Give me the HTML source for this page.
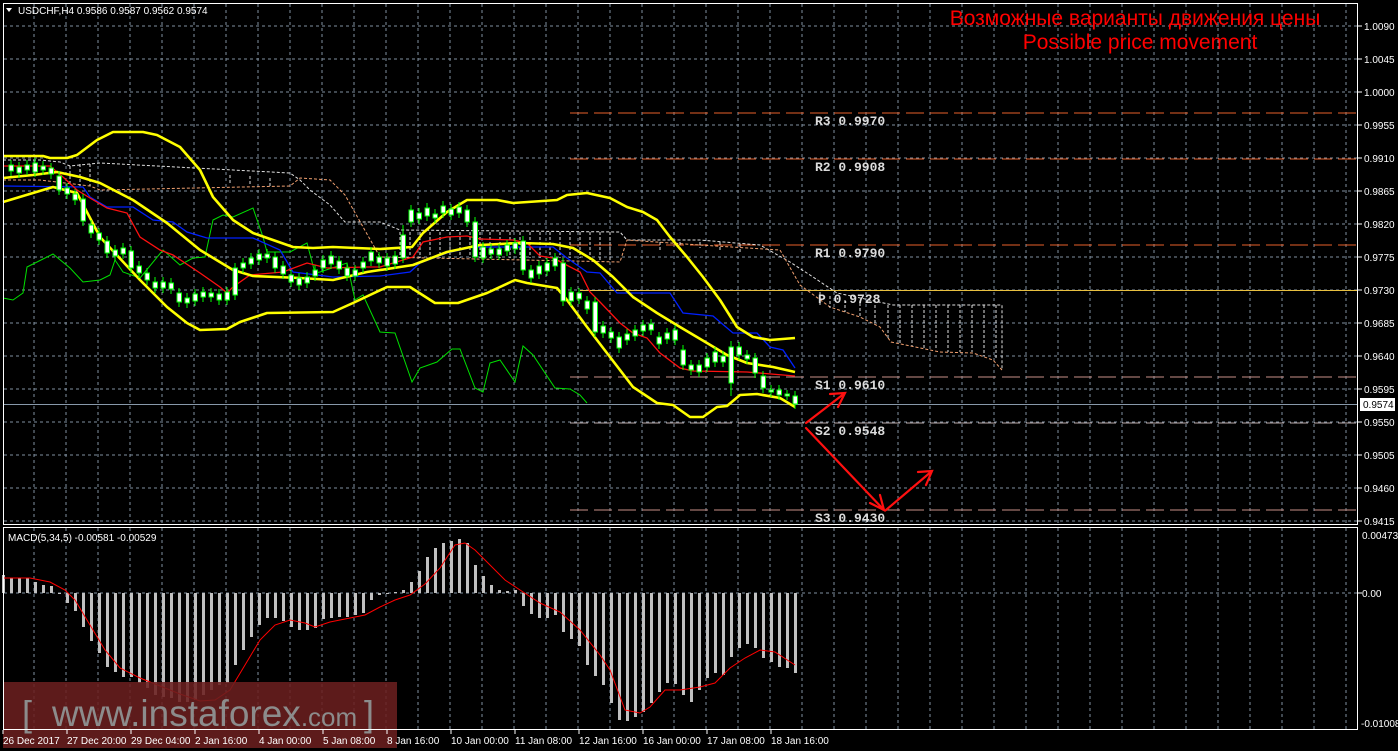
<!DOCTYPE html>
<html><head><meta charset="utf-8"><style>
html,body{margin:0;padding:0;background:#000;width:1398px;height:751px;overflow:hidden}
svg{display:block}
.ax{font-family:"Liberation Sans",sans-serif;font-size:10px;fill:#fff}
.pv{font-family:"Liberation Mono",monospace;font-size:13px;font-weight:bold;fill:#dcdcdc}
</style></head><body>
<svg width="1398" height="751" viewBox="0 0 1398 751" xmlns="http://www.w3.org/2000/svg">
<rect width="1398" height="751" fill="#000"/>
<!-- grid -->
<g stroke="#8090a0" stroke-width="1" stroke-dasharray="3,3" fill="none">
<path d="M34 4V524M66 4V524M98 4V524M130 4V524M162 4V524M194 4V524M226 4V524M258 4V524M290 4V524M322 4V524M354 4V524M386 4V524M418 4V524M450 4V524M482 4V524M514 4V524M546 4V524M578 4V524M610 4V524M642 4V524M674 4V524M706 4V524M738 4V524M770 4V524M802 4V524M834 4V524M866 4V524M898 4V524M930 4V524M962 4V524M994 4V524M1026 4V524M1058 4V524M1090 4V524M1122 4V524M1154 4V524M1186 4V524M1218 4V524M1250 4V524M1282 4V524M1314 4V524M1346 4V524"/>
<path d="M34 528V729M66 528V729M98 528V729M130 528V729M162 528V729M194 528V729M226 528V729M258 528V729M290 528V729M322 528V729M354 528V729M386 528V729M418 528V729M450 528V729M482 528V729M514 528V729M546 528V729M578 528V729M610 528V729M642 528V729M674 528V729M706 528V729M738 528V729M770 528V729M802 528V729M834 528V729M866 528V729M898 528V729M930 528V729M962 528V729M994 528V729M1026 528V729M1058 528V729M1090 528V729M1122 528V729M1154 528V729M1186 528V729M1218 528V729M1250 528V729M1282 528V729M1314 528V729M1346 528V729"/>
<path d="M4 26H1357M4 59H1357M4 92H1357M4 125H1357M4 158H1357M4 191H1357M4 224H1357M4 257H1357M4 290H1357M4 323H1357M4 356H1357M4 389H1357M4 422H1357M4 455H1357M4 488H1357M4 521H1357M4 593H1357"/>
</g>
<!-- pivot lines -->
<g fill="none" stroke-dasharray="18,6">
<path d="M570 113H1357M570 159H1357M570 245H1357" stroke="#e8602a"/>
<path d="M570 377H1357M570 510H1357" stroke="#c89088"/>
<path d="M570 423H1357" stroke="#b8a8a8"/>
</g>
<path d="M580 290.5H1357" stroke="#e8c040" stroke-width="1"/>
<path d="M4 404.5H1357" stroke="#8899aa" stroke-width="1"/>
<!-- ichimoku cloud -->
<g fill="none" stroke-width="1" stroke-dasharray="3,2">
<polyline stroke="#e0e0e0" points="3,160 40,160 60,162 70,166 100,163 290,173 300,180 310,190 330,205 345,222 380,222 400,230 620,232 627,240 700,240 760,245 790,262 813,277 837,293 893,305 1002,305 1002,370"/>
<polyline stroke="#f0a070" points="3,180 40,180 90,186 100,190 290,186 300,178 330,180 345,195 380,257 620,262 627,240 700,245 780,250 800,285 830,307 860,317 880,327 891,342 940,352 973,353 993,360 1002,370"/>
<path stroke="#e0e0e0" d="M400 232V258M410 232V258M420 232V258M430 232V258M440 232V258M450 232V258M460 232V258M470 232V258M480 232V258M490 232V258M500 232V258M510 232V258M520 232V258M530 232V258M540 232V258M550 232V258M560 232V258M570 232V258M580 232V258M590 232V260M600 232V260M610 232V260M900 305V344M912 305V346M924 305V348M936 305V350M948 305V352M960 305V352M972 305V352M984 305V356M996 305V360M820 292V305M830 296V308M845 300V312M860 303V318M875 305V324M888 305V338M70 166V185M80 164V186M90 164V186M230 175V185M250 176V186M270 178V187M660 242V252M680 242V250M700 242V248M720 242V250M740 244V252"/>
</g>
<!-- chikou green -->
<polyline fill="none" stroke="#00e000" stroke-width="1" points="3,298 13,300 23,293 27,267 53,254 70,268 83,282 100,280 110,275 115,260 123,272 140,278 163,250 180,265 193,258 205,257 213,220 223,215 233,217 253,208 263,237 267,252 290,252 307,243 315,273 320,272 347,263 355,300 363,295 380,332 395,333 412,382 420,368 437,362 452,349 460,349 475,388 483,392 490,363 500,360 515,382 523,346 533,355 555,388 570,389 580,395 587,403"/>
<!-- kijun blue -->
<polyline fill="none" stroke="#0020ff" stroke-width="1.3" points="3,186 83,187 90,197 107,207 133,207 153,220 173,222 187,232 207,238 253,238 280,250 293,272 333,277 380,276 410,272 420,263 447,253 473,247 553,247 567,258 587,272 600,273 617,293 670,293 683,313 713,316 733,333 757,333 770,347 783,350 795,368"/>
<!-- tenkan red -->
<polyline fill="none" stroke="#ff1010" stroke-width="1.3" points="3,166 50,166 63,177 77,190 90,198 107,208 127,213 140,237 160,250 173,255 200,273 220,287 227,293 233,287 250,275 283,272 307,263 327,268 367,267 380,267 413,257 423,242 447,237 467,236 480,239 513,240 527,243 540,256 553,258 580,272 590,292 600,302 620,323 633,333 647,338 660,353 680,368 693,371 747,372 795,376"/>
<!-- bollinger -->
<g fill="none" stroke="#ffff00" stroke-width="2.6" stroke-linejoin="round">
<polyline points="3,156 43,156 50,158 67,158 77,155 97,140 113,132 143,132 157,135 180,147 200,170 213,197 233,220 253,233 273,240 293,247 313,248 333,247 380,249 412,247 423,233 447,212 467,200 497,200 513,203 557,200 567,195 587,193 610,198 627,207 643,212 657,220 670,237 687,257 703,277 720,300 737,327 753,337 770,340 795,338"/>
<polyline points="3,178 33,175 57,172 80,177 100,183 133,200 167,223 200,250 233,270 253,276 300,278 333,280 367,272 400,267 413,265 447,252 480,245 520,243 553,244 573,248 593,260 613,277 633,297 657,313 680,327 707,343 727,355 747,363 773,367 795,372"/>
<polyline points="3,202 53,187 77,193 100,237 140,280 167,307 187,323 200,330 227,329 240,322 267,313 333,312 353,303 387,287 410,287 435,303 458,303 487,293 515,280 527,283 557,288 567,300 587,327 610,357 633,387 657,403 673,405 690,417 703,417 717,407 727,406 740,395 757,394 780,398 795,407"/>
</g>
<!-- candles -->
<g stroke="#00ff00" stroke-width="1" fill="#fff">
<path fill="none" d="M11 160V176M19 162V178M27 160V175M35 158V177M43 161V175M51 163V179M59 171V195M67 183V199M75 189V205M83 194V226M91 220V238M99 228V245M107 236V258M115 245V261M123 243V259M131 246V273M139 261V278M147 268V285M155 277V293M163 277V293M171 278V294M179 288V307M187 293V308M195 289V306M203 287V302M211 288V302M219 289V305M227 287V305M235 263V300M243 258V273M251 253V269M259 249V265M267 249V263M275 252V273M283 261V279M291 270V287M299 273V290M307 272V288M315 265V281M323 255V273M331 251V269M339 256V274M347 263V281M355 265V281M363 257V273M371 247V266M379 252V268M387 253V271M395 251V269M403 225V263M411 205V227M419 208V224M427 203V221M435 209V223M443 201V218M451 204V220M459 202V218M467 205V227M475 217V262M483 242V263M491 244V259M499 244V260M507 240V256M515 238V254M523 236V275M531 265V283M539 261V279M547 258V276M555 253V271M563 258V306M571 287V306M579 288V304M587 296V314M595 297V337M603 321V338M611 327V343M619 332V353M627 329V345M635 325V341M643 320V336M651 319V335M659 332V349M667 328V344M675 325V345M683 345V370M691 360V375M699 360V377M707 353V372M715 347V367M723 351V367M731 341V396M739 342V360M747 350V364M755 353V378M763 371V393M771 385V397M779 385V400M787 390V400M795 391V409"/>
<rect x="9" y="165" width="4.5" height="6"/><rect x="17" y="167" width="4.5" height="6"/><rect x="25" y="165" width="4.5" height="5"/><rect x="33" y="163" width="4.5" height="9"/><rect x="41" y="166" width="4.5" height="4"/><rect x="49" y="168" width="4.5" height="6"/><rect x="57" y="176" width="4.5" height="14"/><rect x="65" y="188" width="4.5" height="6"/><rect x="73" y="194" width="4.5" height="6"/><rect x="81" y="199" width="4.5" height="22"/><rect x="89" y="225" width="4.5" height="8"/><rect x="97" y="233" width="4.5" height="7"/><rect x="105" y="241" width="4.5" height="12"/><rect x="113" y="250" width="4.5" height="6"/><rect x="121" y="248" width="4.5" height="6"/><rect x="129" y="251" width="4.5" height="17"/><rect x="137" y="266" width="4.5" height="7"/><rect x="145" y="273" width="4.5" height="7"/><rect x="153" y="282" width="4.5" height="6"/><rect x="161" y="282" width="4.5" height="6"/><rect x="169" y="283" width="4.5" height="6"/><rect x="177" y="293" width="4.5" height="9"/><rect x="185" y="298" width="4.5" height="5"/><rect x="193" y="294" width="4.5" height="7"/><rect x="201" y="292" width="4.5" height="5"/><rect x="209" y="293" width="4.5" height="4"/><rect x="217" y="294" width="4.5" height="6"/><rect x="225" y="292" width="4.5" height="8"/><rect x="233" y="268" width="4.5" height="27"/><rect x="241" y="263" width="4.5" height="5"/><rect x="249" y="258" width="4.5" height="6"/><rect x="257" y="254" width="4.5" height="6"/><rect x="265" y="254" width="4.5" height="4"/><rect x="273" y="257" width="4.5" height="11"/><rect x="281" y="266" width="4.5" height="8"/><rect x="289" y="275" width="4.5" height="7"/><rect x="297" y="278" width="4.5" height="7"/><rect x="305" y="277" width="4.5" height="6"/><rect x="313" y="270" width="4.5" height="6"/><rect x="321" y="260" width="4.5" height="8"/><rect x="329" y="256" width="4.5" height="8"/><rect x="337" y="261" width="4.5" height="8"/><rect x="345" y="268" width="4.5" height="8"/><rect x="353" y="270" width="4.5" height="6"/><rect x="361" y="262" width="4.5" height="6"/><rect x="369" y="252" width="4.5" height="9"/><rect x="377" y="257" width="4.5" height="6"/><rect x="385" y="258" width="4.5" height="8"/><rect x="393" y="256" width="4.5" height="8"/><rect x="401" y="235" width="4.5" height="23"/><rect x="409" y="210" width="4.5" height="12"/><rect x="417" y="213" width="4.5" height="6"/><rect x="425" y="208" width="4.5" height="8"/><rect x="433" y="214" width="4.5" height="4"/><rect x="441" y="206" width="4.5" height="7"/><rect x="449" y="209" width="4.5" height="6"/><rect x="457" y="207" width="4.5" height="6"/><rect x="465" y="210" width="4.5" height="12"/><rect x="473" y="222" width="4.5" height="35"/><rect x="481" y="247" width="4.5" height="11"/><rect x="489" y="249" width="4.5" height="5"/><rect x="497" y="249" width="4.5" height="6"/><rect x="505" y="245" width="4.5" height="6"/><rect x="513" y="243" width="4.5" height="6"/><rect x="521" y="241" width="4.5" height="29"/><rect x="529" y="270" width="4.5" height="8"/><rect x="537" y="266" width="4.5" height="8"/><rect x="545" y="263" width="4.5" height="8"/><rect x="553" y="258" width="4.5" height="8"/><rect x="561" y="263" width="4.5" height="38"/><rect x="569" y="292" width="4.5" height="9"/><rect x="577" y="293" width="4.5" height="6"/><rect x="585" y="301" width="4.5" height="8"/><rect x="593" y="302" width="4.5" height="30"/><rect x="601" y="326" width="4.5" height="7"/><rect x="609" y="332" width="4.5" height="6"/><rect x="617" y="337" width="4.5" height="11"/><rect x="625" y="334" width="4.5" height="6"/><rect x="633" y="330" width="4.5" height="6"/><rect x="641" y="325" width="4.5" height="6"/><rect x="649" y="324" width="4.5" height="6"/><rect x="657" y="337" width="4.5" height="7"/><rect x="665" y="333" width="4.5" height="6"/><rect x="673" y="330" width="4.5" height="10"/><rect x="681" y="350" width="4.5" height="15"/><rect x="689" y="365" width="4.5" height="5"/><rect x="697" y="365" width="4.5" height="7"/><rect x="705" y="358" width="4.5" height="9"/><rect x="713" y="352" width="4.5" height="10"/><rect x="721" y="356" width="4.5" height="6"/><rect x="729" y="347" width="4.5" height="36"/><rect x="737" y="347" width="4.5" height="8"/><rect x="745" y="355" width="4.5" height="4"/><rect x="753" y="358" width="4.5" height="15"/><rect x="761" y="376" width="4.5" height="12"/><rect x="769" y="390" width="4.5" height="2"/><rect x="777" y="390" width="4.5" height="5"/><rect x="785" y="394" width="4.5" height="2"/><rect x="793" y="396" width="4.5" height="8"/>
</g>
<!-- pivot labels -->
<text class="pv" x="815" y="125">R3 0.9970</text>
<text class="pv" x="815" y="171">R2 0.9908</text>
<text class="pv" x="815" y="257">R1 0.9790</text>
<text class="pv" x="818" y="303">P 0.9728</text>
<text class="pv" x="815" y="389">S1 0.9610</text>
<text class="pv" x="815" y="435">S2 0.9548</text>
<text class="pv" x="815" y="522">S3 0.9430</text>
<!-- arrows -->
<g stroke="#ff1010" stroke-width="2.2" fill="none" stroke-linecap="round">
<path d="M806 423L845 393M830 394L845 393L838 407"/>
<path d="M806 428L884 510M870 503L884 510L880 495"/>
<path d="M886 510L932 471M918 472L932 471L926 485"/>
</g>
<!-- title -->
<text x="1135" y="25" text-anchor="middle" font-family="'Liberation Sans','DejaVu Sans',sans-serif" font-size="21" fill="#ff0000">Возможные варианты движения цены</text>
<text x="1140" y="49" text-anchor="middle" font-family="'Liberation Sans',sans-serif" font-size="21" fill="#ff0000">Possible price movement</text>
<!-- header -->
<path d="M6 8L12 8L9 12Z" fill="#fff"/>
<text class="ax" x="18" y="14" font-size="11">USDCHF,H4  0.9586 0.9587 0.9562 0.9574</text>
<!-- MACD histogram -->
<g fill="#c0c0c0">
<rect x="2" y="575" width="3" height="18"/><rect x="10" y="578" width="3" height="15"/><rect x="18" y="578" width="3" height="15"/><rect x="26" y="578" width="3" height="15"/><rect x="34" y="582" width="3" height="11"/><rect x="42" y="585" width="3" height="8"/><rect x="50" y="586" width="3" height="7"/><rect x="58" y="593" width="3" height="1"/>
<rect x="66" y="593" width="3" height="10"/><rect x="74" y="593" width="3" height="18"/><rect x="82" y="593" width="3" height="34"/><rect x="90" y="593" width="3" height="48"/><rect x="98" y="593" width="3" height="60"/><rect x="106" y="593" width="3" height="74"/><rect x="114" y="593" width="3" height="79"/><rect x="122" y="593" width="3" height="84"/><rect x="130" y="593" width="3" height="84"/><rect x="138" y="593" width="3" height="90"/><rect x="146" y="593" width="3" height="95"/><rect x="154" y="593" width="3" height="102"/><rect x="162" y="593" width="3" height="104"/><rect x="170" y="593" width="3" height="105"/><rect x="178" y="593" width="3" height="109"/><rect x="186" y="593" width="3" height="109"/><rect x="194" y="593" width="3" height="107"/><rect x="202" y="593" width="3" height="102"/><rect x="210" y="593" width="3" height="97"/><rect x="218" y="593" width="3" height="92"/><rect x="226" y="593" width="3" height="90"/><rect x="234" y="593" width="3" height="72"/><rect x="242" y="593" width="3" height="57"/><rect x="250" y="593" width="3" height="44"/><rect x="258" y="593" width="3" height="32"/><rect x="266" y="593" width="3" height="25"/><rect x="274" y="593" width="3" height="25"/><rect x="282" y="593" width="3" height="28"/><rect x="290" y="593" width="3" height="34"/><rect x="298" y="593" width="3" height="37"/><rect x="306" y="593" width="3" height="37"/><rect x="314" y="593" width="3" height="35"/><rect x="322" y="593" width="3" height="26"/><rect x="330" y="593" width="3" height="25"/><rect x="338" y="593" width="3" height="24"/><rect x="346" y="593" width="3" height="24"/><rect x="354" y="593" width="3" height="22"/><rect x="362" y="593" width="3" height="20"/><rect x="370" y="593" width="3" height="7"/><rect x="378" y="593" width="3" height="2"/><rect x="386" y="593" width="3" height="1"/>
<rect x="394" y="592" width="3" height="1"/><rect x="402" y="590" width="3" height="3"/><rect x="410" y="582" width="3" height="11"/><rect x="418" y="571" width="3" height="22"/><rect x="426" y="557" width="3" height="36"/><rect x="434" y="548" width="3" height="45"/><rect x="442" y="543" width="3" height="50"/><rect x="450" y="541" width="3" height="52"/><rect x="458" y="539" width="3" height="54"/><rect x="466" y="543" width="3" height="50"/><rect x="474" y="565" width="3" height="28"/><rect x="482" y="576" width="3" height="17"/><rect x="490" y="585" width="3" height="8"/><rect x="498" y="590" width="3" height="3"/><rect x="506" y="591" width="3" height="2"/><rect x="514" y="590" width="3" height="3"/>
<rect x="522" y="593" width="3" height="13"/><rect x="530" y="593" width="3" height="21"/><rect x="538" y="593" width="3" height="25"/><rect x="546" y="593" width="3" height="25"/><rect x="554" y="593" width="3" height="22"/><rect x="562" y="593" width="3" height="39"/><rect x="570" y="593" width="3" height="46"/><rect x="578" y="593" width="3" height="53"/><rect x="586" y="593" width="3" height="72"/><rect x="594" y="593" width="3" height="83"/><rect x="602" y="593" width="3" height="92"/><rect x="610" y="593" width="3" height="110"/><rect x="618" y="593" width="3" height="127"/><rect x="626" y="593" width="3" height="128"/><rect x="634" y="593" width="3" height="124"/><rect x="642" y="593" width="3" height="119"/><rect x="650" y="593" width="3" height="110"/><rect x="658" y="593" width="3" height="99"/><rect x="666" y="593" width="3" height="90"/><rect x="674" y="593" width="3" height="91"/><rect x="682" y="593" width="3" height="102"/><rect x="690" y="593" width="3" height="109"/><rect x="698" y="593" width="3" height="97"/><rect x="706" y="593" width="3" height="85"/><rect x="714" y="593" width="3" height="80"/><rect x="722" y="593" width="3" height="82"/><rect x="730" y="593" width="3" height="64"/><rect x="738" y="593" width="3" height="55"/><rect x="746" y="593" width="3" height="51"/><rect x="754" y="593" width="3" height="55"/><rect x="762" y="593" width="3" height="65"/><rect x="770" y="593" width="3" height="69"/><rect x="778" y="593" width="3" height="74"/><rect x="786" y="593" width="3" height="75"/><rect x="794" y="593" width="3" height="80"/>
</g>
<polyline fill="none" stroke="#ff0000" stroke-width="1" points="3,578 30,578 50,582 65,590 75,600 90,625 105,650 120,668 140,678 160,686 180,694 200,701 215,700 230,690 245,665 260,640 275,625 290,620 305,623 315,627 330,622 350,618 365,615 380,607 395,600 410,595 425,584 440,568 455,545 465,543 475,550 490,565 505,580 520,590 540,603 560,612 580,630 600,655 610,670 625,710 640,713 650,707 665,690 680,690 700,687 715,683 730,668 745,658 760,650 775,652 795,665"/>
<text class="ax" x="8" y="541">MACD(5,34,5) -0.00581 -0.00529</text>
<!-- watermark -->
<rect x="3" y="682" width="394" height="66" fill="#6a1f1f" fill-opacity="0.88"/>
<text x="22" y="726" font-family="'Liberation Sans',sans-serif" font-size="36" fill="#8c8c8c">[</text>
<text x="52" y="726" font-family="'Liberation Sans',sans-serif" font-size="37" fill="#8c8c8c">www.instaforex<tspan font-size="26">.com</tspan></text>
<text x="364" y="726" font-family="'Liberation Sans',sans-serif" font-size="36" fill="#8c8c8c">]</text>
<!-- borders -->
<rect x="3.5" y="3.5" width="1354" height="521" fill="none" stroke="#fff" stroke-width="1"/>
<rect x="3.5" y="527.5" width="1354" height="202" fill="none" stroke="#fff" stroke-width="1"/>
<!-- price axis -->
<g stroke="#fff"><path d="M1358 26h4M1358 59h4M1358 92h4M1358 125h4M1358 158h4M1358 191h4M1358 224h4M1358 257h4M1358 290h4M1358 323h4M1358 356h4M1358 389h4M1358 422h4M1358 455h4M1358 488h4M1358 521h4M1358 593h4"/></g>
<g class="ax">
<text x="1364" y="30">1.0090</text><text x="1364" y="63">1.0045</text><text x="1364" y="96">1.0000</text><text x="1364" y="129">0.9955</text><text x="1364" y="162">0.9910</text><text x="1364" y="195">0.9865</text><text x="1364" y="228">0.9820</text><text x="1364" y="261">0.9775</text><text x="1364" y="294">0.9730</text><text x="1364" y="327">0.9685</text><text x="1364" y="360">0.9640</text><text x="1364" y="393">0.9595</text><text x="1364" y="426">0.9550</text><text x="1364" y="459">0.9505</text><text x="1364" y="492">0.9460</text><text x="1364" y="525">0.9415</text>
<text x="1362" y="539">0.00473</text><text x="1362" y="597">0.00</text><text x="1361" y="727">-0.01008</text>
</g>
<rect x="1360" y="398" width="35" height="13" fill="#fff"/>
<text x="1363" y="408" font-family="'Liberation Sans',sans-serif" font-size="10" fill="#000">0.9574</text>
<!-- time axis -->
<g stroke="#fff"><path d="M3 730v4M67 730v4M131 730v4M195 730v4M259 730v4M323 730v4M387 730v4M451 730v4M515 730v4M579 730v4M643 730v4M707 730v4M771 730v4"/></g>
<g class="ax">
<text x="3" y="744">26 Dec 2017</text><text x="67" y="744">27 Dec 20:00</text><text x="131" y="744">29 Dec 04:00</text><text x="195" y="744">2 Jan 16:00</text><text x="259" y="744">4 Jan 00:00</text><text x="323" y="744">5 Jan 08:00</text><text x="387" y="744">8 Jan 16:00</text><text x="451" y="744">10 Jan 00:00</text><text x="515" y="744">11 Jan 08:00</text><text x="579" y="744">12 Jan 16:00</text><text x="643" y="744">16 Jan 00:00</text><text x="707" y="744">17 Jan 08:00</text><text x="771" y="744">18 Jan 16:00</text>
</g>
</svg>
</body></html>
